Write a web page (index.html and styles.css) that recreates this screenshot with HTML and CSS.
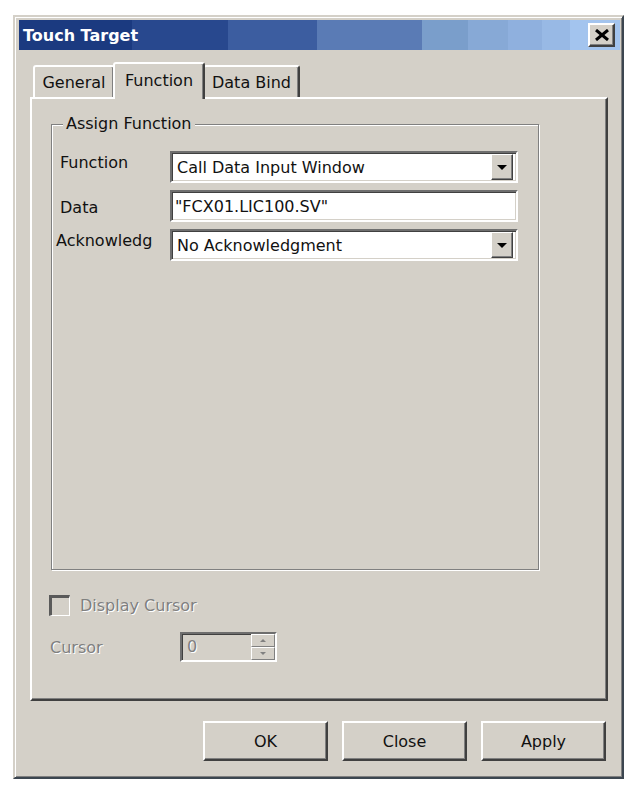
FILE: index.html
```html
<!DOCTYPE html>
<html lang="en">
<head>
  <meta charset="UTF-8" />
  <meta name="viewport" content="width=device-width, initial-scale=1" />
  <title>Touch Target</title>
  <link rel="stylesheet" href="styles.css">
</head>
<body>

<div class="window">
  <div class="titlebar">
    <span class="title">Touch Target</span>
    <button class="close-btn" aria-label="Close">
      <svg width="16" height="12" viewBox="0 0 16 12">
        <path d="M2 1 L14 11 M14 1 L2 11" stroke="#000" stroke-width="3" fill="none" />
      </svg>
    </button>
  </div>

  <div class="dialog-body">
    <div class="tabs">
      <div class="tab tab-general">General</div>
      <div class="tab tab-active">Function</div>
      <div class="tab tab-bind">Data Bind</div>
    </div>

    <div class="tab-panel">
      <fieldset class="group">
        <legend>Assign Function</legend>
        <div class="fields">
          <div class="field-row">
            <label class="field-label">Function</label>
            <div class="sunken combo">
              <span class="combo-text">Call Data Input Window</span>
              <span class="drop-btn"><span class="arrow"></span></span>
            </div>
          </div>
          <div class="field-row">
            <label class="field-label label-data">Data</label>
            <div class="sunken combo">
              <span class="combo-text input-text">"FCX01.LIC100.SV"</span>
            </div>
          </div>
          <div class="field-row">
            <label class="field-label label-ack">Acknowledg</label>
            <div class="sunken combo">
              <span class="combo-text">No Acknowledgment</span>
              <span class="drop-btn"><span class="arrow"></span></span>
            </div>
          </div>
        </div>
      </fieldset>

      <div class="check-row">
        <span class="sunken checkbox"></span>
        <span class="disabled-text">Display Cursor</span>
      </div>

      <div class="cursor-row">
        <span class="cursor-label disabled-text">Cursor</span>
        <div class="sunken spinner">
          <span class="spin-value disabled-text">0</span>
          <span class="spin-btns">
            <span class="spin-btn"><span class="spin-up"></span></span>
            <span class="spin-btn"><span class="spin-down"></span></span>
          </span>
        </div>
      </div>
    </div>

    <div class="buttons">
      <button class="btn">OK</button>
      <button class="btn">Close</button>
      <button class="btn">Apply</button>
    </div>
  </div>
</div>

</body>
</html>
```

FILE: styles.css
```css
* {
  box-sizing: border-box;
}
body {
  margin: 0;
  background: #fff;
  font-family: "DejaVu Sans", Verdana, sans-serif;
  font-size: 16px;
  color: #111;
}
button {
  font: inherit;
  color: inherit;
  padding: 0;
  margin: 0;
  background: #d4d0c8;
  cursor: default;
}

/* window frame */
.window {
  width: 611px;
  margin: 15px 0 0 13px;
  background: #d4d0c8;
  border: 2px solid;
  border-color: #d4d0c8 #3c4650 #3c4650 #d4d0c8;
  box-shadow: inset 1px 1px #fff, inset -1px -1px #808080;
  padding: 3px 2px 3px 4px;
}
.titlebar {
  height: 30px;
  display: flex;
  align-items: center;
  justify-content: space-between;
  padding: 0 5px 0 4px;
  background: linear-gradient(90deg,
    #1b3a80 0 113px, #28488e 113px 209px, #3c5da0 209px 298px,
    #5a7bb5 298px 403px, #7a9ecb 403px 449px, #87a9d6 449px 489px,
    #8fb0de 489px 523px, #98b9e5 523px 551px, #a3c4ee 551px);
}
.title {
  color: #fff;
  font-weight: bold;
  font-size: 16px;
}
.close-btn {
  width: 27px;
  height: 24px;
  display: flex;
  align-items: center;
  justify-content: center;
  border: 2px solid;
  border-color: #fff #404040 #404040 #fff;
  box-shadow: inset -1px -1px #808080;
}

.dialog-body {
  padding: 12px 12px 13px 11px;
}

/* tabs */
.tabs {
  display: flex;
  align-items: flex-end;
  height: 35px;
  padding-left: 3px;
}
.tab {
  height: 32px;
  padding-top: 6px;
  line-height: 20px;
  text-align: center;
  background: #d4d0c8;
  border: 2px solid;
  border-bottom: 0;
  border-color: #fff #404040 transparent #fff;
  box-shadow: inset -1px 0 #808080;
  border-radius: 3px 3px 0 0;
}
.tab-general {
  width: 82px;
}
.tab-active {
  position: relative;
  z-index: 1;
  width: 92px;
  height: 37px;
  padding-top: 7px;
  margin: 0 -2px -2px -2px;
}
.tab-bind {
  width: 97px;
}
.tab-panel {
  height: 604px;
  padding: 15px 19px 0 19px;
  border: 2px solid;
  border-color: #fff #404040 #404040 #fff;
  box-shadow: inset -1px -1px #808080;
}

/* group box */
.group {
  margin: 0;
  width: 488px;
  height: 456px;
  padding: 17px 20px 0 8px;
  border: 1px solid #808080;
  box-shadow: inset 1px 1px #fff, 1px 1px #fff;
  min-inline-size: 0;
}
.group legend {
  margin-left: 3px;
  padding: 0 3px;
  line-height: 20px;
  background: #d4d0c8;
}
.fields {
  display: flex;
  flex-direction: column;
  gap: 7px;
}
.field-row {
  display: flex;
  height: 32px;
}
.field-label {
  width: 110px;
  padding-top: 2px;
  line-height: 20px;
}
.label-data {
  padding-top: 8px;
}
.label-ack {
  width: 114px;
  margin-left: -4px;
}

.sunken {
  border: 2px solid;
  border-color: #6e6e6e #fff #fff #6e6e6e;
  box-shadow: inset 1px 1px #404040, inset -1px -1px #d4d0c8;
}
.combo {
  flex: 1;
  display: flex;
  background: #fff;
}
.combo-text {
  flex: 1;
  padding: 1px 0 0 5px;
  line-height: 27px;
  white-space: nowrap;
}
.input-text {
  padding-left: 3px;
}
.drop-btn {
  width: 22px;
  margin: 1px 3px 1px 0;
  display: flex;
  align-items: center;
  justify-content: center;
  background: #d4d0c8;
  border: 1px solid;
  border-color: #fff #404040 #404040 #fff;
  box-shadow: inset -1px -1px #808080;
}
.arrow {
  width: 0;
  height: 0;
  border-left: 5px solid transparent;
  border-right: 5px solid transparent;
  border-top: 5px solid #000;
}

/* cursor options */
.disabled-text {
  color: #808080;
  text-shadow: 1px 1px #fff;
}
.check-row {
  display: flex;
  align-items: center;
  gap: 10px;
  margin: 25px 0 0 -2px;
  height: 21px;
}
.checkbox {
  width: 21px;
  height: 21px;
  background: #d4d0c8;
  border-width: 3px 1px 1px 3px;
  border-color: #5a5a5a #fff #fff #5a5a5a;
  box-shadow: none;
}
.cursor-row {
  display: flex;
  align-items: center;
  margin: 16px 0 0 -1px;
  height: 30px;
}
.cursor-label {
  width: 130px;
}
.spinner {
  width: 97px;
  height: 30px;
  display: flex;
  background: #d4d0c8;
}
.spin-value {
  flex: 1;
  padding-left: 5px;
  line-height: 26px;
}
.spin-btns {
  width: 24px;
  display: flex;
  flex-direction: column;
}
.spin-btn {
  flex: 1;
  display: flex;
  align-items: center;
  justify-content: center;
  border: 1px solid;
  border-color: #fff #808080 #808080 #fff;
}
.spin-up,
.spin-down {
  width: 0;
  height: 0;
  border-left: 3px solid transparent;
  border-right: 3px solid transparent;
}
.spin-up {
  border-bottom: 3px solid #808080;
}
.spin-down {
  border-top: 3px solid #808080;
}

/* dialog buttons */
.buttons {
  display: flex;
  justify-content: flex-end;
  gap: 14px;
  margin-top: 20px;
  padding-right: 2px;
}
.btn {
  width: 125px;
  height: 40px;
  border: 2px solid;
  border-color: #fff #404040 #404040 #fff;
  box-shadow: inset -1px -1px #808080;
}
```
